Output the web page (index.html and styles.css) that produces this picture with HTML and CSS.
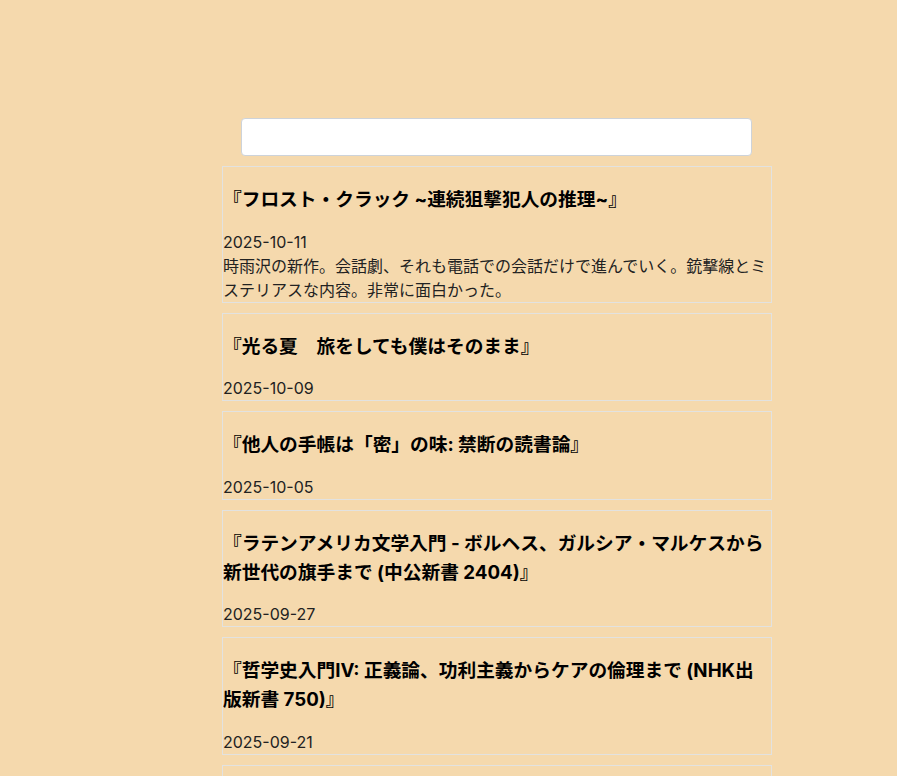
FILE: index.html
```html
<!DOCTYPE html>
<html lang="ja">
<head>
  <meta charset="UTF-8" />
  <meta name="viewport" content="width=device-width, initial-scale=1" />
  <title>読書記録</title>
  <link rel="stylesheet" href="styles.css">
</head>
<body>
  <div class="page">
    <!-- Search -->
    <div class="search-box">
      <input type="text" id="searchInput" />
    </div>

    <!-- Book list -->
    <div class="book-list">
      <div class="book">
        <h3 class="book-title">『フロスト・クラック ~連続狙撃犯人の推理~』</h3>
        <div class="book-date">2025-10-11</div>
        <div class="book-note">時雨沢の新作。会話劇、それも電話での会話だけで進んでいく。銃撃線とミステリアスな内容。非常に面白かった。</div>
      </div>
      <div class="book">
        <h3 class="book-title">『光る夏　旅をしても僕はそのまま』</h3>
        <div class="book-date">2025-10-09</div>
      </div>
      <div class="book">
        <h3 class="book-title">『他人の手帳は「密」の味: 禁断の読書論』</h3>
        <div class="book-date">2025-10-05</div>
      </div>
      <div class="book">
        <h3 class="book-title">『ラテンアメリカ文学入門 - ボルヘス、ガルシア・マルケスから新世代の旗手まで (中公新書 2404)』</h3>
        <div class="book-date">2025-09-27</div>
      </div>
      <div class="book">
        <h3 class="book-title">『哲学史入門IV: 正義論、功利主義からケアの倫理まで (NHK出版新書 750)』</h3>
        <div class="book-date">2025-09-21</div>
      </div>
      <div class="book">
        <h3 class="book-title">『読書の日記』</h3>
        <div class="book-date">2025-09-14</div>
      </div>
    </div>
  </div>
</body>
</html>
```

FILE: styles.css
```css
* {
  box-sizing: border-box;
}

body, html {
  margin: 0;
  padding: 0;
  background-color: #f5d9ad;
  color: #222;
  font-family: Inter, "Noto Sans CJK JP", sans-serif;
  font-size: 16px;
  line-height: 1.5;
  overflow: hidden;
}

.page {
  width: 550px;
  margin-left: 222px;
  padding-top: 118px;
}

/* Search */
.search-box {
  padding: 0 20px 0 19px;
  margin-bottom: 10px;
}

.search-box input {
  display: block;
  width: 100%;
  height: 38px;
  border: 1px solid #cdd3da;
  border-radius: 4px;
  background: white;
  font-size: 16px;
  outline: none;
}

/* Books */
.book {
  border: 1px solid #e2e2e0;
  margin-bottom: 10px;
}

.book-title {
  margin: 18px 0 15.5px;
  font-size: 18.72px;
  font-weight: 700;
  line-height: 29px;
  color: #000;
}

.book-date,
.book-note {
  color: #222;
}
```
